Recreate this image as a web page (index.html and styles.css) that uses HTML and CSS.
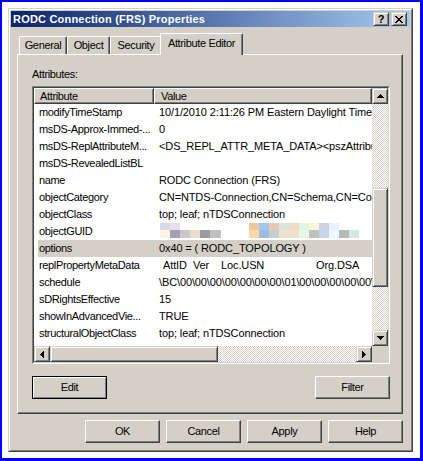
FILE: index.html
```html
<!DOCTYPE html>
<html>
<head>
<meta charset="utf-8">
<title>RODC Connection (FRS) Properties</title>
<link rel="stylesheet" href="styles.css">
</head>
<body>
<div class="dialog">
  <div class="frame">
    <div class="titlebar">
      <span class="title">RODC Connection (FRS) Properties</span>
      <span class="cap-btn cap-help">?</span>
      <span class="cap-btn cap-close"><svg width="8" height="7" viewBox="0 0 8 7"><path d="M0 0h2v1H0z M6 0h2v1H6z M1 1h2v1H1z M5 1h2v1H5z M2 2h4v1H2z M3 3h2v1H3z M2 4h4v1H2z M1 5h2v1H1z M5 5h2v1H5z M0 6h2v1H0z M6 6h2v1H6z" fill="#000"/></svg></span>
    </div>
    <div class="content">
      <div class="tabs">
        <div class="tab tab-general">General</div>
        <div class="tab tab-object">Object</div>
        <div class="tab tab-security">Security</div>
        <div class="tab tab-attr active">Attribute Editor</div>
      </div>
      <div class="panel">
        <div class="label">Attributes:</div>
        <div class="listbox">
          <div class="listbox-inner">
            <div class="lv-main">
              <div class="lv-header">
                <div class="hcell h-attr">Attribute</div>
                <div class="hcell h-val">Value</div>
              </div>
              <div class="lv-rows">
                <div class="lv-row"><span class="c-attr">modifyTimeStamp</span><span class="c-val">10/1/2010 2:11:26 PM Eastern Daylight Time</span></div>
                <div class="lv-row"><span class="c-attr">msDS-Approx-Immed-...</span><span class="c-val">0</span></div>
                <div class="lv-row"><span class="c-attr">msDS-ReplAttributeM...</span><span class="c-val">&lt;DS_REPL_ATTR_META_DATA&gt;&lt;pszAttributeName&gt;</span></div>
                <div class="lv-row"><span class="c-attr">msDS-RevealedListBL</span><span class="c-val"></span></div>
                <div class="lv-row"><span class="c-attr">name</span><span class="c-val">RODC Connection (FRS)</span></div>
                <div class="lv-row"><span class="c-attr">objectCategory</span><span class="c-val">CN=NTDS-Connection,CN=Schema,CN=Configuration</span></div>
                <div class="lv-row"><span class="c-attr">objectClass</span><span class="c-val">top; leaf; nTDSConnection</span></div>
                <div class="lv-row"><span class="c-attr">objectGUID</span><span class="c-val"><span class="guid"><span class="guid-top"></span><span class="guid-bot"></span></span></span></div>
                <div class="lv-row selected"><span class="c-attr">options</span><span class="c-val">0x40 = ( RODC_TOPOLOGY )</span></div>
                <div class="lv-row"><span class="c-attr">replPropertyMetaData</span><span class="c-val"><span class="m-attid">AttID</span><span class="m-ver">Ver</span><span class="m-usn">Loc.USN</span><span class="m-dsa">Org.DSA</span></span></div>
                <div class="lv-row"><span class="c-attr">schedule</span><span class="c-val">\BC\00\00\00\00\00\00\00\01\00\00\00\00\00\00\00</span></div>
                <div class="lv-row"><span class="c-attr">sDRightsEffective</span><span class="c-val">15</span></div>
                <div class="lv-row"><span class="c-attr">showInAdvancedVie...</span><span class="c-val">TRUE</span></div>
                <div class="lv-row"><span class="c-attr">structuralObjectClass</span><span class="c-val">top; leaf; nTDSConnection</span></div>
                <div class="lv-row"><span class="c-attr">subSchemaSubEntry</span><span class="c-val">CN=Aggregate,CN=Schema,CN=Configuration</span></div>
              </div>
            </div>
            <div class="vscroll">
              <div class="sb-btn"><svg width="7" height="4" viewBox="0 0 7 4"><path d="M3 0h1v1H3z M2 1h3v1H2z M1 2h5v1H1z M0 3h7v1H0z" fill="#000"/></svg></div>
              <div class="sb-track v-track"><div class="sb-thumb v-thumb"></div></div>
              <div class="sb-btn"><svg width="7" height="4" viewBox="0 0 7 4"><path d="M0 0h7v1H0z M1 1h5v1H1z M2 2h3v1H2z M3 3h1v1H3z" fill="#000"/></svg></div>
            </div>
            <div class="hscroll">
              <div class="sb-btn"><svg width="4" height="7" viewBox="0 0 4 7"><path d="M0 3h1v1H0z M1 2h1v3H1z M2 1h1v5H2z M3 0h1v7H3z" fill="#000"/></svg></div>
              <div class="sb-track h-track"><div class="sb-thumb h-thumb"></div></div>
              <div class="sb-btn"><svg width="4" height="7" viewBox="0 0 4 7"><path d="M0 0h1v7H0z M1 1h1v5H1z M2 2h1v3H2z M3 3h1v1H3z" fill="#000"/></svg></div>
            </div>
            <div class="corner"></div>
          </div>
        </div>
        <div class="panel-buttons">
          <div class="btn default">Edit</div>
          <div class="btn">Filter</div>
        </div>
      </div>
      <div class="dlg-buttons">
        <div class="btn">OK</div>
        <div class="btn">Cancel</div>
        <div class="btn">Apply</div>
        <div class="btn">Help</div>
      </div>
    </div>
  </div>
</div>
</body>
</html>
```
FILE: styles.css
```css
* { box-sizing: border-box; }
html { margin: 0; padding: 0; }
body {
  margin: 0;
  width: 423px;
  height: 461px;
  overflow: hidden;
  background: #fff;
  border: solid #0000ff;
  border-width: 2px 3px 3px 2px;
  padding: 6px 0 0 6px;
  font-family: "Liberation Sans", Arial, sans-serif;
  font-size: 11px;
  letter-spacing: -0.35px;
  color: #000;
}
.dialog {
  width: 405px;
  height: 444px;
  background: #d4d0c8;
  border: 1px solid;
  border-color: #d4d0c8 #404040 #404040 #d4d0c8;
}
.frame {
  height: 100%;
  border: 1px solid;
  border-color: #fff #808080 #808080 #fff;
  padding: 1px;
  display: flex;
  flex-direction: column;
}
.titlebar {
  flex: none;
  height: 16px;
  display: flex;
  align-items: center;
  gap: 2px;
  padding: 0 3px 0 2px;
  background: linear-gradient(to right, #0a246a, #a6caf0);
}
.title {
  flex: 1;
  color: #fff;
  font-weight: bold;
  letter-spacing: 0.2px;
  line-height: 16px;
  white-space: nowrap;
}
.cap-btn {
  width: 16px;
  height: 14px;
  background: #d4d0c8;
  border: 1px solid;
  border-color: #d4d0c8 #404040 #404040 #d4d0c8;
  box-shadow: inset 1px 1px #fff, inset -1px -1px #808080;
  display: flex;
  align-items: center;
  justify-content: center;
}
.cap-help {
  font-weight: bold;
  font-size: 11px;
  letter-spacing: 0;
  line-height: 12px;
}
.content {
  flex: 1;
  display: flex;
  flex-direction: column;
  padding: 6px 7px 6px 6px;
}
.tabs {
  flex: none;
  height: 21px;
  display: flex;
  align-items: flex-end;
  padding-left: 2px;
}
.tab {
  height: 18px;
  padding-top: 2px;
  line-height: 13px;
  text-align: center;
  white-space: nowrap;
  background: #d4d0c8;
  border-top: 1px solid #fff;
  border-left: 1px solid #fff;
  border-right: 1px solid #404040;
  box-shadow: inset -1px 0 #808080;
  border-radius: 2px 2px 0 0;
}
.tab-general { width: 48px; }
.tab-object { width: 43px; }
.tab-security { width: 52px; }
.tab-attr { width: 83px; }
.tab.active {
  height: 22px;
  padding-top: 3px;
  margin: 0 -2px -1px -2px;
  position: relative;
  z-index: 1;
}
.panel {
  flex: 1;
  display: flex;
  flex-direction: column;
  border-top: 1px solid #fff;
  border-left: 1px solid #fff;
  border-right: 1px solid #404040;
  border-bottom: 1px solid #404040;
  box-shadow: inset -1px -1px #808080;
  padding: 0 12px 0 14px;
}
.label {
  margin-top: 13px;
  line-height: 13px;
}
.listbox {
  margin-top: 5px;
  height: 278px;
  border: 1px solid;
  border-color: #808080 #fff #fff #808080;
}
.listbox-inner {
  height: 100%;
  border: 1px solid;
  border-color: #404040 #d4d0c8 #d4d0c8 #404040;
  background: #fff;
  display: grid;
  grid-template-columns: 1fr 16px;
  grid-template-rows: 1fr 16px;
}
.lv-main {
  display: flex;
  flex-direction: column;
  min-height: 0;
  min-width: 0;
  overflow: hidden;
}
.lv-header {
  flex: none;
  display: flex;
  height: 16px;
}
.hcell {
  height: 16px;
  line-height: 14px;
  background: #d4d0c8;
  border: 1px solid;
  border-color: #fff #404040 #404040 #fff;
  box-shadow: inset -1px -1px #808080;
  white-space: nowrap;
}
.h-attr { width: 120px; padding-left: 5px; }
.h-val { flex: 1; padding-left: 6px; }
.lv-rows {
  flex: 1;
  min-height: 0;
  overflow: hidden;
}
.lv-row {
  display: flex;
  height: 17px;
  line-height: 17px;
  margin-left: 4px;
  white-space: nowrap;
}
.lv-row.selected { background: #d4d0c8; }
.c-attr {
  flex: none;
  width: 116px;
  padding-left: 1px;
  overflow: hidden;
}
.c-val {
  flex: 1;
  min-width: 0;
  padding-left: 5px;
  overflow: hidden;
  letter-spacing: -0.12px;
}
.m-attid { display: inline-block; margin-left: 4px; width: 30px; }
.m-ver { display: inline-block; width: 28px; }
.m-usn { display: inline-block; width: 95px; }
.m-dsa { display: inline-block; }
.guid {
  display: block;
  width: 200px;
  margin-left: 1px;
}
.guid-top, .guid-bot { display: block; width: 200px; }
.guid-top {
  height: 7px;
  background: linear-gradient(to right,
    #d8d8ec 0 10px, #e6dfea 10px 20px, transparent 20px 89px,
    #ecc8a0 89px 99px, #a8c4e8 99px 109px, #e8c8b4 109px 119px, #d8e4dc 119px 129px,
    #ecdcc4 129px 139px, #e4f4e4 139px 149px, #fff4dc 149px 159px, #d0d0e4 159px 169px,
    #e4f4ff 169px 179px, transparent 179px);
}
.guid-bot {
  height: 8px;
  background: linear-gradient(to right,
    #fff4e4 0 10px, #a0a0b4 10px 20px, #c8c8c8 20px 30px, #ecdccc 30px 40px,
    #9c9c9c 40px 50px, #c0c0c0 50px 61px, transparent 61px 89px,
    #ffd8a8 89px 99px, #9cbce0 99px 109px, #c0d0d0 109px 119px, #f0e0cc 119px 129px,
    #f0e0cc 129px 139px, #e8f8e8 139px 149px, #c0c0c0 149px 159px, #c8d4e8 159px 169px,
    #f0f8ff 169px 179px, #b8b8b8 179px 189px, #d4e8e8 189px 199px, transparent 199px);
}
.vscroll {
  display: flex;
  flex-direction: column;
  min-height: 0;
}
.hscroll {
  display: flex;
  min-width: 0;
}
.sb-btn {
  flex: none;
  width: 16px;
  height: 16px;
  background: #d4d0c8;
  border: 1px solid;
  border-color: #d4d0c8 #404040 #404040 #d4d0c8;
  box-shadow: inset 1px 1px #fff, inset -1px -1px #808080;
  display: flex;
  align-items: center;
  justify-content: center;
}
.sb-btn svg { display: block; }
.sb-track {
  flex: 1;
  background: repeating-conic-gradient(#fff 0 25%, #d4d0c8 0 50%) 0 0 / 2px 2px;
  display: flex;
}
.v-track { flex-direction: column; }
.sb-thumb {
  flex: none;
  background: #d4d0c8;
  border: 1px solid;
  border-color: #d4d0c8 #404040 #404040 #d4d0c8;
  box-shadow: inset 1px 1px #fff, inset -1px -1px #808080;
}
.v-thumb { height: 99px; margin-top: 84px; }
.h-thumb { width: 168px; }
.corner { background: #d4d0c8; }
.panel-buttons {
  margin-top: 12px;
  display: flex;
  justify-content: space-between;
}
.btn {
  width: 75px;
  height: 23px;
  line-height: 21px;
  text-align: center;
  background: #d4d0c8;
  border: 1px solid;
  border-color: #fff #404040 #404040 #fff;
  box-shadow: inset -1px -1px #808080;
}
.btn.default {
  border-color: #000;
  box-shadow: inset 1px 1px #fff, inset -1px -1px #808080;
}
.dlg-buttons {
  flex: none;
  margin-top: 6px;
  display: flex;
  justify-content: flex-end;
  gap: 6px;
}
```
